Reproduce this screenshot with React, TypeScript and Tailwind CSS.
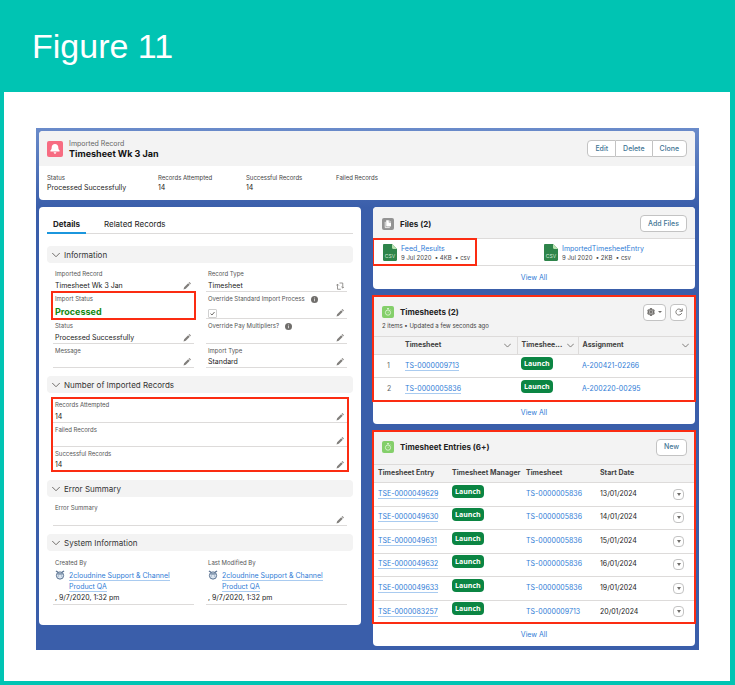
import React from 'react';
import { Settings } from 'lucide-react';

const RED = 'outline-2 outline-[#fb2c12]';

const ChevronIcon = ({ className }: { className: string }) => (
  <svg viewBox="0 0 16 16" className={`shrink-0 text-[#706e6b] ${className}`} fill="none" stroke="currentColor" strokeWidth="2">
    <path d="M1 4.500l7 7 7-7" strokeLinecap="round" strokeLinejoin="round" />
  </svg>
);

const PencilIcon = () => (
  <svg viewBox="0 0 16 16" className="size-2 shrink-0 text-[#807e7b]" fill="currentColor">
    <path d="M1 15l1.300-4.500L10.300 2.500l3.200 3.200-8 8zM11.300 1.500l.8-.8c.4-.4 1-.4 1.400 0l1.800 1.800c.4.4.4 1 0 1.400l-.8.800z" />
  </svg>
);

const SwapIcon = () => (
  <svg viewBox="0 0 16 16" className="size-2 shrink-0 text-[#807e7b]" fill="none" stroke="currentColor" strokeWidth="1.600">
    <path d="M7 2h6.500v10M10.800 9.500l2.700 2.700L16 9.500M9.500 14.500H3v-10M.5 7L3 4.300 5.700 7" />
  </svg>
);

const InfoIcon = () => (
  <svg viewBox="0 0 16 16" className="size-[7px] shrink-0">
    <circle cx="8" cy="8" r="8" fill="#706e6b" />
    <path d="M7 7h2v5H7zM7 3.500h2v2H7z" fill="#ddd" />
  </svg>
);

const RefreshIcon = () => (
  <svg viewBox="0 0 16 16" className="size-2" fill="none" stroke="currentColor" strokeWidth="1.800">
    <path d="M13.500 10A6 6 0 1 1 12 3.800L14 5.800" />
    <path d="M14.500 1v5.500H9" />
  </svg>
);

const BellIcon = () => (
  <svg viewBox="0 0 16 16" className="size-4 shrink-0">
    <rect width="16" height="16" rx="2" fill="#f76c82" />
    <path d="M8 3c-2 0-3.300 1.300-3.300 3.200 0 1.800-.5 2.400-1.100 3-.5.500-.3 1.300.4 1.300h8c.7 0 .9-.8.4-1.300-.6-.6-1.100-1.200-1.100-3C11.300 4.300 10 3 8 3zM6.600 11.300c.1.900.7 1.500 1.400 1.500s1.300-.6 1.400-1.500z" fill="#fff" />
  </svg>
);

const FilesIcon = () => (
  <svg viewBox="0 0 12 12" className="size-3 shrink-0">
    <rect width="12" height="12" rx="2" fill="#939393" />
    <path d="M4.600 2.200h2.200v2.200h2.200v3.700c0 .2-.1.400-.4.400h-4c-.2 0-.4-.2-.4-.4V2.600c0-.2.2-.4.400-.4z" fill="#fff" />
    <path d="M7.400 2.200L9 3.800H7.400z" fill="#fff" />
    <path d="M3.200 3.800v5.800h4.600" fill="none" stroke="#fff" strokeWidth=".8" />
  </svg>
);

const TimerIcon = () => (
  <svg viewBox="0 0 12 12" className="size-3 shrink-0">
    <rect width="12" height="12" rx="2" fill="#84cf6a" />
    <circle cx="6" cy="6.600" r="2.600" fill="none" stroke="#e6f6e0" strokeWidth=".8" />
    <path d="M5 2.500h2M6 2.500v1.300M6 6.700l.9-1M8.300 3.600l.6.600" stroke="#e6f6e0" strokeWidth=".8" fill="none" />
  </svg>
);

const CsvIcon = () => (
  <svg viewBox="0 0 14 17" className="h-[17px] w-[14px] shrink-0">
    <path d="M1.200 0H9l5 5v10.800c0 .7-.5 1.200-1.200 1.200H1.200C.5 17 0 16.500 0 15.800V1.200C0 .5.5 0 1.200 0z" fill="#2e844a" />
    <path d="M9 0l5 5h-3.800C9.500 5 9 4.500 9 3.800z" fill="#b9e3b0" />
    <text x="7" y="14" textAnchor="middle" fontSize="5" fill="#d5ead9" fontFamily="Inter, sans-serif">CSV</text>
  </svg>
);

const AvatarIcon = () => (
  <svg viewBox="0 0 16 16" className="size-[10px] shrink-0" fill="none" stroke="#5a7291">
    <path d="M1.500 1.500l3.500 2.200M14.500 1.500L11 3.700" strokeWidth="2" />
    <circle cx="8" cy="8.800" r="5.800" strokeWidth="1.600" fill="#dbe5f0" />
    <path d="M4 6.300h8" strokeWidth="1.800" />
    <path d="M5.500 9v1.200M10.500 9v1.200" strokeWidth="1.200" />
  </svg>
);

const Button = ({ className = '', children }: { className?: string; children: React.ReactNode }) => (
  <button type="button" className={`h-[17px] border border-[#c3c3c3] bg-white px-[7px] pt-px text-[7px] font-medium text-[#3f7595] ${className}`}>
    {children}
  </button>
);

const Launch = () => (
  <button type="button" className="block h-[13px] rounded-[4px] bg-[#0b8543] px-[3px] font-['Open_Sans'] text-[7px] font-bold leading-[13px] text-white">
    Launch
  </button>
);

const Link = ({ underline, children }: { underline?: boolean; children: React.ReactNode }) => (
  <a href="#" className={underline ? 'border-b border-[#a9cbf0] text-[#2f7cd6]' : 'text-[#2f7cd6]'}>{children}</a>
);

const Section = ({ title }: { title: string }) => (
  <h3 className="flex h-[17px] items-center gap-1 rounded-sm bg-[#f3f3f3] px-[5px] pt-px text-[8px] text-[#333]">
    <ChevronIcon className="size-2" />
    {title}
  </h3>
);

interface FieldProps {
  label: string;
  value?: React.ReactNode;
  info?: boolean;
  icon?: React.ReactNode;
  className?: string;
}

const Field = ({ label, value, info, icon = <PencilIcon />, className = 'h-[25px]' }: FieldProps) => (
  <div className={`flex flex-col justify-between border-b border-[#dddbda] pl-0.5 ${className}`}>
    <div className="flex items-center gap-1.5 pt-[3px] text-[6px] leading-[8px] text-[#555]">
      {label}
      {info && <InfoIcon />}
    </div>
    <div className="flex h-[10px] items-center justify-between pr-[3px] text-[7px] leading-[10px]">
      <div>{value}</div>
      {icon}
    </div>
  </div>
);

const UserField = ({ label }: { label: string }) => (
  <div className="border-b border-[#dddbda] pl-0.5">
    <div className="text-[6px] leading-[8px] text-[#555]">{label}</div>
    <div className="flex gap-1 pt-[3px]">
      <AvatarIcon />
      <div className="w-[110px] text-[7px] leading-[11px]">
        <Link underline>2cloudnine Support &amp; Channel Product QA</Link>
      </div>
    </div>
    <div className="text-[7px] leading-[12px]">, 9/7/2020, 1:32 pm</div>
  </div>
);

const FileItem = ({ name, size }: { name: string; size: string }) => (
  <div className="flex items-center gap-1">
    <CsvIcon />
    <div className="leading-[9px]">
      <div className="text-[7px]"><Link>{name}</Link></div>
      <div className="text-[6px] text-[#444]">9 Jul 2020 &nbsp;• {size} &nbsp;• csv</div>
    </div>
  </div>
);

const ViewAll = () => (
  <div className="flex h-[23px] items-center justify-center pt-0.5 text-[7px]">
    <Link>View All</Link>
  </div>
);

const summary = [
  ['Status', 'Processed Successfully'],
  ['Records Attempted', '14'],
  ['Successful Records', '14'],
  ['Failed Records', ''],
];

const timesheets = [
  ['TS-0000009713', 'A-200421-02266'],
  ['TS-0000005836', 'A-200220-00295'],
];

const entries = [
  ['TSE-0000049629', 'TS-0000005836', '13/01/2024'],
  ['TSE-0000049630', 'TS-0000005836', '14/01/2024'],
  ['TSE-0000049631', 'TS-0000005836', '15/01/2024'],
  ['TSE-0000049632', 'TS-0000005836', '16/01/2024'],
  ['TSE-0000049633', 'TS-0000005836', '19/01/2024'],
  ['TSE-0000083257', 'TS-0000009713', '20/01/2024'],
];

const RecordHeader = () => (
  <header className="overflow-hidden rounded-sm bg-white">
    <div className="flex h-[35px] items-center gap-1.5 bg-[#f3f3f3] px-2">
      <BellIcon />
      <div className="grow">
        <div className="text-[7px] leading-[9px] text-[#666]">Imported Record</div>
        <h2 className="text-[9px] font-bold leading-[11px] text-[#111]">Timesheet Wk 3 Jan</h2>
      </div>
      <div className="flex">
        <Button className="rounded-l-sm">Edit</Button>
        <Button className="border-x-0">Delete</Button>
        <Button className="rounded-r-sm">Clone</Button>
      </div>
    </div>
    <dl className="grid h-[34px] grid-cols-[111px_88px_90px_1fr] content-center px-2 pb-0.5">
      {summary.map(([label, value]) => (
        <div key={label}>
          <dt className="text-[6px] leading-[10px] text-[#444]">{label}</dt>
          <dd className="h-[9px] text-[7px] leading-[9px]">{value}</dd>
        </div>
      ))}
    </dl>
  </header>
);

const Details = () => (
  <section className="rounded-sm bg-white px-2 pb-5">
    <div role="tablist" className="flex h-[27px] border-b border-[#dddbda] text-[8px]">
      <button type="button" role="tab" aria-selected="true" className="h-[27px] border-b-2 border-[#1b96dd] px-1.5 pt-2 font-bold">Details</button>
      <button type="button" role="tab" aria-selected="false" className="ml-3 h-[27px] px-1.5 pt-1.5">Related Records</button>
    </div>

    <div className="pt-3">
      <Section title="Information" />
    </div>
    <div className="grid grid-cols-2 gap-x-3 px-1.5 pt-1">
      <div>
        <Field label="Imported Record" value="Timesheet Wk 3 Jan" />
        <div className={`-mx-px flex h-[27px] flex-col justify-between px-[3px] -outline-offset-1 ${RED}`}>
          <div className="pt-[3px] text-[6px] leading-[8px] text-[#555]">Import Status</div>
          <div className="text-[9px] font-bold leading-[15px] text-[#118a11]">Processed</div>
        </div>
        <Field label="Status" value="Processed Successfully" />
        <Field label="Message" className="h-6" />
      </div>
      <div>
        <Field label="Record Type" value="Timesheet" icon={<SwapIcon />} />
        <Field
          label="Override Standard Import Process"
          info
          className="h-[27px]"
          value={
            <span className="relative block size-[9px]">
              <input type="checkbox" defaultChecked aria-label="Override Standard Import Process" className="block size-[9px] appearance-none rounded-[1px] border border-[#d0d0d0] bg-white" />
              <svg viewBox="0 0 9 9" className="pointer-events-none absolute inset-0 size-[9px]" fill="none" stroke="#706e6b">
                <path d="M2.500 4.600L4 6l2.500-3" />
              </svg>
            </span>
          }
        />
        <Field label="Override Pay Multipliers?" info />
        <Field label="Import Type" value="Standard" className="h-6" />
      </div>
    </div>

    <div className="pt-2">
      <Section title="Number of Imported Records" />
    </div>
    <div className="px-1 pt-1">
      <div className={`px-0.5 py-px -outline-offset-2 ${RED}`}>
        <Field label="Records Attempted" value="14" />
        <Field label="Failed Records" className="h-6" />
        <Field label="Successful Records" value="14" className="h-6" />
      </div>
    </div>

    <div className="pt-2">
      <Section title="Error Summary" />
    </div>
    <div className="px-1.5 pt-1">
      <Field label="Error Summary" />
    </div>

    <div className="pt-2">
      <Section title="System Information" />
    </div>
    <div className="grid grid-cols-2 gap-x-3 px-1.5 pt-2">
      <UserField label="Created By" />
      <UserField label="Last Modified By" />
    </div>
  </section>
);

const Files = () => (
  <section className="overflow-hidden rounded-sm bg-white">
    <div className="flex h-8 items-center gap-1.5 border-b border-[#dddbda] bg-[#f3f3f3] pl-[9px] pr-2 pt-0.5">
      <FilesIcon />
      <h2 className="grow text-[8px] font-bold">Files (2)</h2>
      <Button className="rounded-sm">Add Files</Button>
    </div>
    <div className="grid h-[27px] grid-cols-2 border-b border-[#dddbda]">
      <div className={`mr-[58px] flex items-center pl-2.5 pt-px -outline-offset-1 ${RED}`}>
        <FileItem name="Feed_Results" size="4KB" />
      </div>
      <div className="flex items-center pl-2.5 pt-px">
        <FileItem name="ImportedTimesheetEntry" size="2KB" />
      </div>
    </div>
    <ViewAll />
  </section>
);

const Timesheets = () => (
  <section className="rounded-sm bg-white">
    <div className={`-outline-offset-1 ${RED}`}>
      <div className="h-10 rounded-t-sm bg-[#f3f3f3] pl-[9px] pr-2 pt-2">
        <div className="flex h-4 items-center gap-1.5">
          <TimerIcon />
          <h2 className="grow text-[8px] font-bold">Timesheets (2)</h2>
          <div className="flex gap-1">
            <button type="button" aria-label="List settings" className="flex h-[17px] w-[23px] items-center justify-center gap-[3px] rounded-sm border border-[#c3c3c3] bg-white text-[#706e6b]">
              <Settings className="size-2" strokeWidth={4} />
              <span className="border-x-2 border-t-2 border-x-transparent border-t-[#706e6b]" />
            </button>
            <button type="button" aria-label="Refresh" className="flex size-[17px] items-center justify-center rounded-sm border border-[#c3c3c3] bg-white text-[#706e6b]">
              <RefreshIcon />
            </button>
          </div>
        </div>
        <p className="text-[6px] leading-[12px] text-[#444]">2 items • Updated a few seconds ago</p>
      </div>
      <table className="w-full table-fixed text-left text-[7px]">
        <thead>
          <tr className="h-[18px] border-y border-[#dddbda] bg-[#f3f3f3] text-[#444]">
            <th className="w-8" aria-label="Row" />
            <th className="w-28 border-r border-[#dddbda] pr-1.5">
              <div className="flex items-center justify-between">Timesheet<ChevronIcon className="size-[7px]" /></div>
            </th>
            <th className="w-[61px] border-r border-[#dddbda] px-1">
              <div className="flex items-center justify-between">Timeshee...<ChevronIcon className="size-[7px]" /></div>
            </th>
            <th className="pl-1 pr-1.5">
              <div className="flex items-center justify-between">Assignment<ChevronIcon className="size-[7px]" /></div>
            </th>
          </tr>
        </thead>
        <tbody>
          {timesheets.map(([id, assignment], i) => (
            <tr key={id} className="h-[23px] border-b border-[#dddbda] last:border-0">
              <td className="pl-3.5 text-[#666]">{i + 1}</td>
              <td><Link underline>{id}</Link></td>
              <td className="pb-1.5 pl-1"><Launch /></td>
              <td className="pl-1"><Link>{assignment}</Link></td>
            </tr>
          ))}
        </tbody>
      </table>
    </div>
    <ViewAll />
  </section>
);

const Entries = () => (
  <section className="rounded-sm bg-white">
    <div className={`-outline-offset-1 ${RED}`}>
      <div className="flex h-[33px] items-center gap-1.5 rounded-t-sm bg-[#f3f3f3] pl-[9px] pr-2">
        <TimerIcon />
        <h2 className="grow text-[8px] font-bold">Timesheet Entries (6+)</h2>
        <Button className="rounded-sm">New</Button>
      </div>
      <table className="w-full table-fixed text-left text-[7px]">
        <thead>
          <tr className="h-[18px] border-y border-[#dddbda] bg-[#f3f3f3] text-[#444]">
            <th className="w-[79px] pl-[5px]">Timesheet Entry</th>
            <th className="w-[74px] whitespace-nowrap">Timesheet Manager</th>
            <th className="w-[74px]">Timesheet</th>
            <th>Start Date</th>
            <th className="w-[22px]" aria-label="Actions" />
          </tr>
        </thead>
        <tbody>
          {entries.map(([id, timesheet, date]) => (
            <tr key={id} className="border-b border-[#dddbda] last:border-0 odd:h-6 even:h-[23px]">
              <td className="pl-[5px]"><Link underline>{id}</Link></td>
              <td className="pb-1.5"><Launch /></td>
              <td><Link>{timesheet}</Link></td>
              <td>{date}</td>
              <td>
                <button type="button" aria-label="Show actions" className="flex size-[11px] items-center justify-center rounded-sm border border-[#c3c3c3] bg-white">
                  <span className="border-x-2 border-t-3 border-x-transparent border-t-[#706e6b]" />
                </button>
              </td>
            </tr>
          ))}
        </tbody>
      </table>
    </div>
    <ViewAll />
  </section>
);

export default function App() {
  return (
    <div className="bg-[#00c4b3] pb-[5px] pl-1 pr-[5px]">
      <h1 className="flex h-[92px] items-center px-7 font-['Liberation_Sans'] text-[34px] text-white">Figure 11</h1>
      <div className="bg-white pb-[31px] pl-8 pr-[31px] pt-9">
        <main className="flex flex-col gap-[7px] bg-[#3a5eaa] bg-linear-to-b from-[#6a8bca] to-[#3a5eaa] to-[80px] pb-1 pl-[3px] pr-1 pt-[3px] font-['Inter',sans-serif] text-[#222]">
          <RecordHeader />
          <div className="grid grid-cols-2 items-start gap-3">
            <Details />
            <div className="flex flex-col gap-[7px]">
              <Files />
              <Timesheets />
              <Entries />
            </div>
          </div>
        </main>
      </div>
    </div>
  );
}
